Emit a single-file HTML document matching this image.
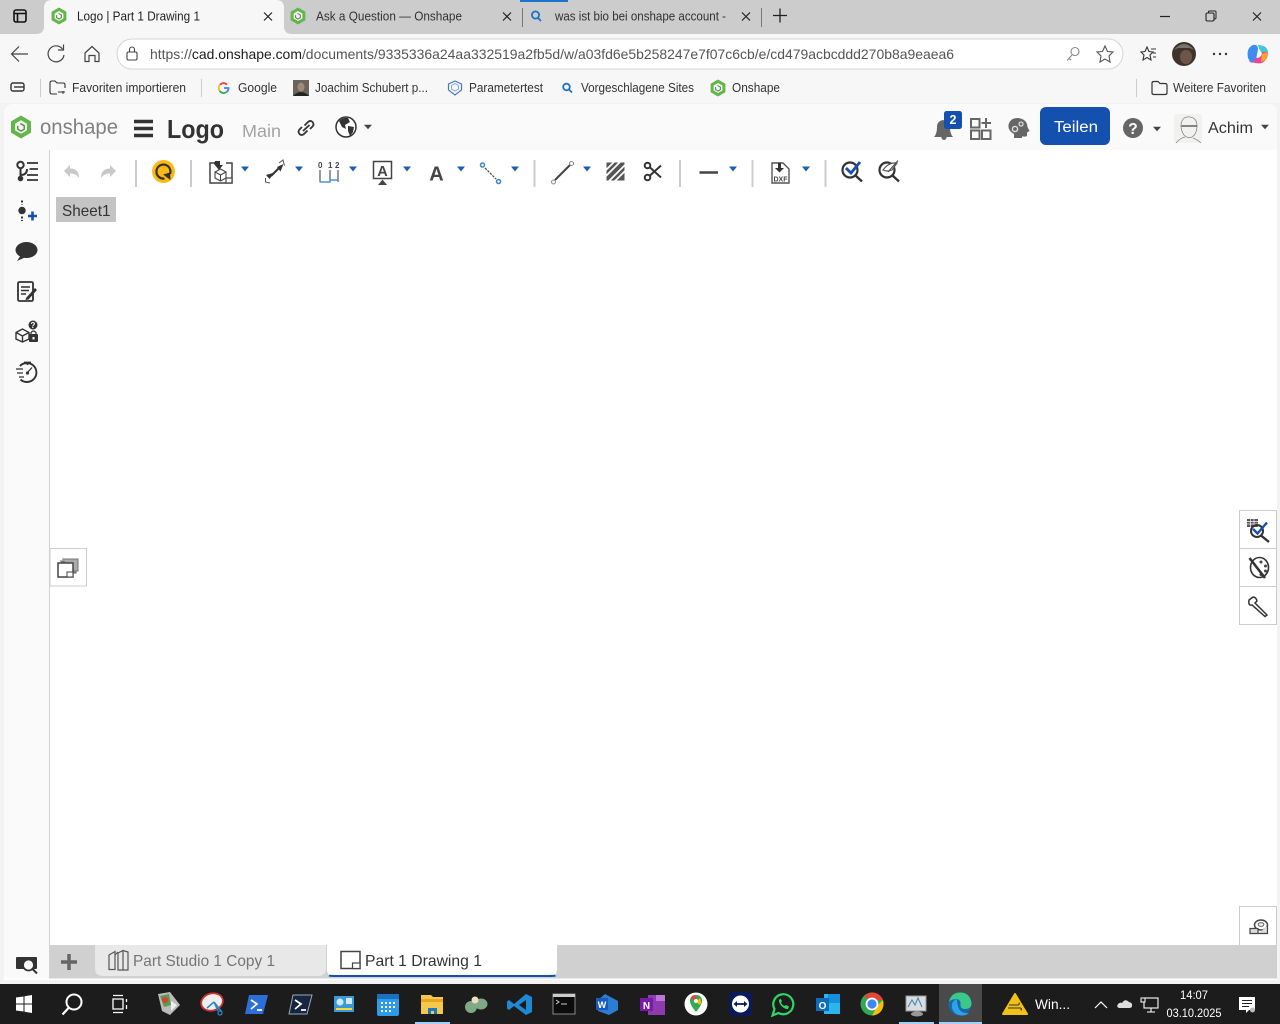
<!DOCTYPE html>
<html lang="de"><head><meta charset="utf-8"><title>Logo | Part 1 Drawing 1</title>
<style>
html,body{margin:0;padding:0;width:1280px;height:1024px;overflow:hidden;background:#f3f3f3}
svg{display:block}
text{font-family:"Liberation Sans",sans-serif;white-space:pre}
.b{font-size:12.5px;fill:#333}
</style></head><body>
<svg width="1280" height="1024" viewBox="0 0 1280 1024" xmlns="http://www.w3.org/2000/svg">
<defs>
<g id="os">
<path d="M0-8.5 7.4-4.2V4.2L0 8.5-7.4 4.2V-4.2Z" fill="#63b64a"/>
<path d="M0-5 4.400-2.500V2.500L0 5-4.400 2.500V-2.500Z" fill="#eef6ea"/>
<path d="M-.5-2.600 2.400-.9V1.600L0 3-2.400 1.600V-.9" fill="none" stroke="#5d7f55" stroke-width="1"/>
</g>
<path id="cb" d="M-4-2.500H4L0 2.500Z" fill="#1c5fb0"/>
<path id="cd" d="M-4-2.200H4L0 2.200Z" fill="#444"/>
<g id="x"><path d="M-4-4 4 4M4-4-4 4" fill="none" stroke="#222" stroke-width="1.200"/></g>
</defs>

<!-- browser chrome -->
<rect width="1280" height="34" fill="#cccccc"/>
<rect y="34" width="1280" height="70" fill="#f7f7f7"/>
<rect x="520" width="48" height="2" fill="#1a73c8"/>
<path d="M36 34q8 0 8-8V8q0-8 8-8H276q8 0 8 8V26q0 8 8 8Z" fill="#f7f7f7"/>
<rect x="14" y="10" width="12" height="12" rx="2" fill="none" stroke="#111" stroke-width="1.600"/>
<path d="M14 13.500H26M17.500 13.500V22" stroke="#111" stroke-width="1.600" fill="none"/>
<use href="#os" x="59" y="16"/>
<text x="77" y="20.500" font-size="12.500" fill="#222" textLength="123" lengthAdjust="spacingAndGlyphs">Logo | Part 1 Drawing 1</text>
<use href="#x" x="268" y="16.500"/>
<use href="#os" x="298" y="16"/>
<text x="316" y="20.500" font-size="12.500" fill="#333" textLength="146" lengthAdjust="spacingAndGlyphs">Ask a Question — Onshape</text>
<use href="#x" x="507" y="16.500"/>
<rect x="522" y="8" width="1" height="19" fill="#777"/>
<circle cx="535.500" cy="15" r="3.600" fill="none" stroke="#1a73c8" stroke-width="1.800"/><path d="M538 18 541 21" stroke="#1a73c8" stroke-width="1.800"/>
<text x="555" y="20.500" font-size="12.500" fill="#333" textLength="171" lengthAdjust="spacingAndGlyphs">was ist bio bei onshape account -</text>
<use href="#x" x="746" y="16.500"/>
<rect x="761" y="8" width="1" height="19" fill="#777"/>
<path d="M773 15.500H787M780 8.500V22.500" stroke="#222" stroke-width="1.300"/>
<path d="M1160 16.500H1170" stroke="#222" stroke-width="1.200"/>
<rect x="1206" y="13" width="8" height="8" rx="1.500" fill="none" stroke="#222" stroke-width="1.100"/><path d="M1208.500 13V11.500Q1208.500 11 1209.500 11H1215Q1216 11 1216 12V18Q1216 19 1214.500 19" fill="none" stroke="#222" stroke-width="1"/>
<use href="#x" x="1257" y="16.500"/>

<!-- nav -->
<path d="M28 54H12M19 46.500 11.500 54 19 61.500" fill="none" stroke="#444" stroke-width="1.200"/>
<path d="M62.500 49A8 8 0 1 0 64 55M63.500 44.500V50H58" fill="none" stroke="#444" stroke-width="1.200"/>
<path d="M85 53 92 46.500 99 53V61.500H95V55.500H89V61.500H85Z" fill="none" stroke="#444" stroke-width="1.200"/>
<rect x="117" y="39" width="1006" height="30" rx="15" fill="#fff" stroke="#d5d5d5"/>
<rect x="127" y="52" width="10" height="8" rx="1.500" fill="none" stroke="#444" stroke-width="1.100"/><path d="M129.500 52V49.500A2.500 2.500 0 0 1 134.500 49.500V52" fill="none" stroke="#444" stroke-width="1.100"/>
<text x="150" y="59" font-size="14" fill="#555" textLength="804" lengthAdjust="spacingAndGlyphs"><tspan fill="#555">https://</tspan><tspan fill="#1b1b1b">cad.onshape.com</tspan><tspan fill="#555">/documents/9335336a24aa332519a2fb5d/w/a03fd6e5b258247e7f07c6cb/e/cd479acbcddd270b8a9eaea6</tspan></text>
<circle cx="1075" cy="51.500" r="4" fill="none" stroke="#888" stroke-width="1.100"/><path d="M1072 55 1067 60.500M1069 58.500 1071 60" fill="none" stroke="#888" stroke-width="1.100"/>
<path d="M1105 46 1107.500 51.500 1113 52 1109 56 1110 62 1105 59 1100 62 1101 56 1097 52 1102.500 51.500Z" fill="none" stroke="#555" stroke-width="1.100"/>
<path d="M1147 47 1149 51.500 1153 52 1150 55 1151 60 1147 57.500 1143 60 1144 55 1141 52 1145 51.500Z" fill="none" stroke="#333" stroke-width="1.100"/><path d="M1151 49H1156M1153 53H1156M1153 57H1156" stroke="#333" stroke-width="1"/>
<circle cx="1184" cy="54" r="12" fill="#3f342d"/><ellipse cx="1186" cy="57" rx="6" ry="7" fill="#6f5547"/><path d="M1174 50Q1184 38 1194 50L1190 48H1178Z" fill="#77766c"/>
<circle cx="1214" cy="54" r="1.200" fill="#333"/><circle cx="1220" cy="54" r="1.200" fill="#333"/><circle cx="1226" cy="54" r="1.200" fill="#333"/>
<path d="M1248 58Q1246 48 1253 45 1258 44 1258 49L1256 60Q1254 64 1250 62Z" fill="#3d8df0"/>
<path d="M1258 45Q1267 45 1268 52L1262 53Q1259 50 1258 45Z" fill="#44c6d8"/>
<path d="M1252 62Q1256 64 1262 63 1268 60 1268 52L1262 52Q1262 58 1256 58Z" fill="#e8469f"/>
<path d="M1262 54 1268 52 1266 60 1261 62Z" fill="#f5a623"/>

<!-- bookmarks -->
<rect x="11" y="83" width="13" height="8" rx="2" fill="none" stroke="#333" stroke-width="1.400"/><path d="M14 87H24" stroke="#333" stroke-width="1.400"/>
<rect x="40" y="79" width="1" height="18" fill="#ccc"/>
<path d="M57 94H52Q50 94 50 92V83Q50 81 52 81H55L57 83H63Q65 83 65 85V88" fill="none" stroke="#333" stroke-width="1.100"/><path d="M58 92H65M63 94V91" fill="none" stroke="#333" stroke-width="1"/>
<text class="b" x="72" y="92" textLength="114" lengthAdjust="spacingAndGlyphs">Favoriten importieren</text>
<rect x="201" y="79" width="1" height="18" fill="#ccc"/>
<path d="M227 84.800A4.500 4.500 0 0 0 220 84.800" fill="none" stroke="#ea4335" stroke-width="1.800"/>
<path d="M219.800 85 A4.500 4.500 0 0 0 219.800 91" fill="none" stroke="#fbbc05" stroke-width="1.800"/>
<path d="M219.800 91A4.500 4.500 0 0 0 226.500 92" fill="none" stroke="#34a853" stroke-width="1.800"/>
<path d="M224 88H228.500A4.500 4.500 0 0 1 226.500 92" fill="none" stroke="#4285f4" stroke-width="1.800"/>
<text class="b" x="238" y="92" textLength="39" lengthAdjust="spacingAndGlyphs">Google</text>
<rect x="293" y="80" width="16" height="16" fill="#6b645d"/><ellipse cx="301" cy="87" rx="3.500" ry="4.500" fill="#a08a78"/><path d="M293 96Q301 88 309 96Z" fill="#222"/>
<text class="b" x="315" y="92" textLength="113" lengthAdjust="spacingAndGlyphs">Joachim Schubert p...</text>
<path d="M455 81 461.500 84V90L455 95 448.500 90V84Z" fill="none" stroke="#4a78c0" stroke-width="1.200"/><path d="M451.500 85.500 455 83.500 458.500 85.500V89L455 91 451.500 89Z" fill="none" stroke="#8aa8d8"/>
<text class="b" x="469" y="92" textLength="74" lengthAdjust="spacingAndGlyphs">Parametertest</text>
<circle cx="566.500" cy="87" r="3.300" fill="none" stroke="#1a73c8" stroke-width="1.800"/><path d="M569 89.500 572 92.500" stroke="#1a73c8" stroke-width="1.800"/>
<text class="b" x="581" y="92" textLength="113" lengthAdjust="spacingAndGlyphs">Vorgeschlagene Sites</text>
<use href="#os" x="718" y="88"/>
<text class="b" x="732" y="92" textLength="48" lengthAdjust="spacingAndGlyphs">Onshape</text>
<rect x="1136" y="79" width="1" height="18" fill="#ccc"/>
<path d="M1152 83Q1152 81.500 1154 81.500H1158L1160 83.500H1165Q1167 83.500 1167 85.500V93Q1167 94.500 1165 94.500H1154Q1152 94.500 1152 93Z" fill="none" stroke="#333" stroke-width="1.200"/>
<text class="b" x="1173" y="92" textLength="93" lengthAdjust="spacingAndGlyphs">Weitere Favoriten</text>

<!-- app frame -->
<rect y="103" width="1280" height="881" fill="#f3f3f3"/>
<path d="M4 980V114Q4 104 14 104H1267Q1277 104 1277 114V980Z" fill="#fff"/>
<path d="M4 150V114Q4 104 14 104H1267Q1277 104 1277 114V150Z" fill="#fafafa"/>
<path d="M4 150H49V980H14Q4 980 4 970Z" fill="#fafafa"/>
<rect x="49" y="150" width="1" height="830" fill="#d2d2d2"/>

<!-- header -->
<g transform="translate(21 127) scale(1.350)"><use href="#os"/></g>
<text x="40" y="134" font-size="21" fill="#808080" textLength="78" lengthAdjust="spacingAndGlyphs">onshape</text>
<path d="M134 121.500H153M134 128.500H153M134 135.500H153" stroke="#333" stroke-width="3.600"/>
<text x="167" y="138" font-size="26" font-weight="700" fill="#333" textLength="57" lengthAdjust="spacingAndGlyphs">Logo</text>
<text x="242" y="137" font-size="17.500" fill="#a3a3a3" textLength="39" lengthAdjust="spacingAndGlyphs">Main</text>
<g fill="none" stroke="#333" stroke-width="1.800"><path d="M304.500 125.500 308 122Q310.500 120 312.500 122 314.500 124.500 312.500 126.500L310 129"/><path d="M307.500 130.500 304 134Q301.500 136 299.500 134 297.500 131.500 299.500 129.500L302 127"/><path d="M303 131 309.500 125"/></g>
<circle cx="346" cy="127" r="10" fill="#fff" stroke="#333" stroke-width="1.500"/>
<path d="M339 121Q343 117 348 118L350 122 345 125 346 129 342 127ZM348 126 354 127 353 132 350 136 348 131Z" fill="#333"/>
<use href="#cd" x="368" y="127"/>
<path d="M934 137Q937 134 937 127 937 121 943 120 949 121 950 127 950 134 953 137Z" fill="#666"/><circle cx="944" cy="137.500" r="2.500" fill="#666"/>
<rect x="944" y="111" width="18" height="18" rx="2.500" fill="#1450ae"/>
<text x="953" y="124" font-size="12.500" font-weight="700" fill="#fff" text-anchor="middle">2</text>
<g fill="none" stroke="#666" stroke-width="2"><rect x="971" y="119" width="8.500" height="8.500"/><rect x="971" y="130.500" width="8.500" height="8.500"/><rect x="982" y="130.500" width="8.500" height="8.500"/><path d="M986 118V128M981.500 123H991"/></g>
<path d="M1014 138V134Q1008 131 1008.500 125 1010 118 1018 118 1027 119 1027.500 127L1029.500 131 1027 132.500V135Q1027 137 1024 136.500H1022V138Z" fill="#666"/>
<circle cx="1015" cy="129" r="2.600" fill="none" stroke="#ddd" stroke-width="1.400"/><circle cx="1021" cy="124" r="2" fill="none" stroke="#ddd" stroke-width="1.300"/>
<rect x="1040" y="107" width="70" height="38" rx="6" fill="#1450ae"/>
<text x="1054" y="132" font-size="15.500" fill="#fff" textLength="44" lengthAdjust="spacingAndGlyphs">Teilen</text>
<circle cx="1133" cy="128" r="10" fill="#666"/>
<text x="1133" y="134" font-size="15.500" font-weight="700" fill="#fff" text-anchor="middle">?</text>
<use href="#cd" x="1157" y="129"/>
<rect x="1174" y="114" width="28" height="29" rx="3" fill="#f1f1ef"/>
<g fill="none" stroke="#888" stroke-width=".8"><path d="M1181 125Q1182 116 1190 117 1197 118 1197 126 1197 134 1192 137 1188 139 1184 135 1181 131 1181 125Z"/><path d="M1176 143Q1180 138 1185 137M1193 138Q1198 140 1201 143"/></g>
<path d="M1181.500 126H1188.500M1191 126H1197M1188.500 126H1191" stroke="#444" stroke-width="1.300"/>
<text x="1208" y="133" font-size="15.500" fill="#333" textLength="45" lengthAdjust="spacingAndGlyphs">Achim</text>
<use href="#cd" x="1265" y="127"/>

<!-- left sidebar icons -->
<g fill="none" stroke="#333" stroke-width="2"><circle cx="20.500" cy="165" r="3.200"/><path d="M20.500 168V178.500M20.500 175Q27 175 27 169"/><circle cx="20.500" cy="178.500" r="1.800" fill="#333"/><path d="M27 163H38M29.500 169H38M27 175H38M27 180H38" stroke-width="1.800"/></g>
<circle cx="22" cy="210.500" r="3.700" fill="#333"/><path d="M22 200.500V204.500M22 216.500V221" stroke="#333" stroke-width="2" stroke-dasharray="2 1.500"/>
<path d="M28 216H37M32.500 211.500V220.500" stroke="#1450ae" stroke-width="2.600"/>
<ellipse cx="26.500" cy="250" rx="11" ry="8" fill="#333"/><path d="M21 255 17 261 26 257Z" fill="#333"/>
<rect x="18" y="282" width="15" height="19" rx="1.500" fill="none" stroke="#333" stroke-width="1.800"/>
<path d="M21 287H30M21 290.500H29M21 294H26" stroke="#333" stroke-width="1.500"/><path d="M26 298 35 288 37 290 28.500 299.500 25.500 300Z" fill="#333"/>
<path d="M16 332.500 22.500 329 29 332.500V339L22.500 342 16 339ZM16 332.500 22.500 336 29 332.500M22.500 336V342" fill="none" stroke="#333" stroke-width="1.400"/>
<circle cx="33" cy="325" r="4.500" fill="#333"/><text x="33" y="328" font-size="8" font-weight="700" fill="#fff" text-anchor="middle">?</text>
<rect x="29" y="334" width="9" height="8" rx="1" fill="#333"/><path d="M31 334V332.500Q33.500 329.500 36 332.500V334" fill="none" stroke="#333" stroke-width="1.200"/><rect x="32.500" y="337" width="2" height="2.500" fill="#fff"/>
<path d="M20 366A9.500 9.500 0 1 1 20.500 379.500" fill="none" stroke="#333" stroke-width="1.900"/><path d="M24 362.500H31M27.500 362.500V365" stroke="#333" stroke-width="1.800"/><path d="M16 369H23M17 373H23M19 377H24M27 373 32 367.500" stroke="#333" stroke-width="1.300" fill="none"/>
<circle cx="27.500" cy="373" r="1.600" fill="#333"/>
<rect x="16" y="957" width="21" height="12" rx="1" fill="#333"/><circle cx="28.500" cy="965" r="5.500" fill="#fafafa" stroke="#333" stroke-width="1.800"/><path d="M32.500 969 37 973.500" stroke="#333" stroke-width="2"/>

<!-- toolbar -->
<g fill="#ccc"><rect x="135" y="160" width="2" height="27"/><rect x="190" y="160" width="2" height="27"/><rect x="533.500" y="160" width="2" height="27"/><rect x="679" y="160" width="2" height="27"/><rect x="751.500" y="160" width="2" height="27"/><rect x="824.500" y="160" width="2" height="27"/></g>
<path d="M64 171 70 165V168.500Q79 168.500 79 178 76 173.500 70 173.500V177Z" fill="#c9c9c9"/>
<path d="M116 171 110 165V168.500Q101 168.500 101 178 104 173.500 110 173.500V177Z" fill="#c9c9c9"/>
<circle cx="163.500" cy="171.500" r="11.500" fill="#fdb913"/>
<path d="M170 174A7 7 0 1 0 164.500 178.500" fill="none" stroke="#333" stroke-width="2.200"/><path d="M163 174.500 170 172.500 170.500 180Z" fill="#333"/>
<path d="M216 163H210V183H232V163H226" fill="none" stroke="#444" stroke-width="1.500"/><rect x="226" y="178" width="6" height="5" fill="#fff" stroke="#444" stroke-width="1.200"/>
<path d="M215 161H220V165H223L219 170 214 164" fill="#333"/><path d="M215 172 220.500 169 226 172V178L220.500 181 215 178ZM215 172 220.500 175 226 172M220.500 175V181" fill="none" stroke="#444" stroke-width="1.100"/>
<use href="#cb" x="245" y="169"/>
<path d="M271 176 281 166" stroke="#333" stroke-width="2"/><path d="M266 175 269.500 179 274.500 172.500ZM283.500 164 277 167 280.500 171.500Z" fill="#333"/><path d="M279 163 283 160 284.500 165.500M265.500 178 265.500 182 270 183" fill="none" stroke="#555"/>
<use href="#cb" x="299" y="169"/>
<g font-size="8" fill="#444"><text x="318" y="168" font-weight="700">0</text><text x="328" y="168" font-weight="700">1</text><text x="335" y="168" font-weight="700">2</text></g>
<path d="M320 170V182M330 170V182M338 170V182" stroke="#555" stroke-width="1.200"/><path d="M319.500 182H330V180H338" fill="none" stroke="#4d92d0" stroke-width="1.400"/>
<use href="#cb" x="353" y="169"/>
<rect x="373.500" y="161.500" width="18" height="17" fill="#fff" stroke="#444" stroke-width="1.500"/>
<text x="382.500" y="176" font-size="14.500" font-weight="700" fill="#444" text-anchor="middle">A</text><path d="M378 185 382.500 179.500 387 185Z" fill="#444"/>
<use href="#cb" x="407" y="169"/>
<text x="436.500" y="180.500" font-size="20" font-weight="700" fill="#444" text-anchor="middle">A</text>
<use href="#cb" x="461" y="169"/>
<path d="M485 168 496 179" stroke="#555" stroke-width="1.300" stroke-dasharray="2.500 1"/><circle cx="482.500" cy="165" r="2" fill="#fff" stroke="#3d85c6" stroke-width="1.500"/><circle cx="498.500" cy="181.500" r="2" fill="#fff" stroke="#3d85c6" stroke-width="1.500"/>
<use href="#cb" x="515" y="169"/>
<path d="M555 180 570 165" stroke="#444" stroke-width="2"/><circle cx="553.500" cy="182" r="2" fill="#fff" stroke="#888"/><circle cx="571.500" cy="163.500" r="2" fill="#fff" stroke="#888"/>
<use href="#cb" x="587" y="169"/>
<rect x="606.500" y="162.500" width="18" height="18" fill="#555"/><path d="M606 170 614 162M606 176 620 162M609 181 625 165M615 181 625 171" stroke="#fff" stroke-width="1.700"/>
<g fill="none" stroke="#333" stroke-width="2"><circle cx="647.500" cy="165.500" r="2.800"/><circle cx="647.500" cy="177.500" r="2.800"/><path d="M650 167.500 661 177.500M650 175.500 661 165.500"/></g>
<path d="M699.500 172.500H718" stroke="#444" stroke-width="2.400"/>
<use href="#cb" x="733" y="169"/>
<path d="M772 163H783L789 169V183H772Z" fill="#fff" stroke="#555" stroke-width="1.400"/>
<path d="M778 162.500H781V168H784L779.500 172.500 775 168H778Z" fill="#333"/>
<text x="780.500" y="181.500" font-size="7.500" font-weight="700" fill="#444" text-anchor="middle" textLength="14" lengthAdjust="spacingAndGlyphs">DXF</text>
<use href="#cb" x="806" y="169"/>
<circle cx="850" cy="170" r="7.500" fill="none" stroke="#333" stroke-width="2.200"/><path d="M855.500 175.500 862 181.500" stroke="#333" stroke-width="2.400"/>
<path d="M846 168 851 173 860 162" fill="none" stroke="#1450ae" stroke-width="2.800"/>
<circle cx="887" cy="170" r="7.500" fill="none" stroke="#333" stroke-width="2.200"/><path d="M892.500 175.500 899 181.500" stroke="#333" stroke-width="2.400"/>
<path d="M883 170Q889 162 897 163L892 170Q887 172 883 170ZM888 172 898 160.500" fill="#fff" stroke="#555" stroke-width="1.200"/>

<!-- sheet -->
<rect x="56" y="197" width="60" height="25" fill="#c4c4c4"/>
<text x="62" y="216" font-size="16" fill="#333" textLength="48.500" lengthAdjust="spacingAndGlyphs">Sheet1</text>

<!-- floating left -->
<rect x="50" y="548.500" width="36.500" height="37.500" fill="#fff" stroke="#ccc"/>
<path d="M60 561H76V573H73" fill="#888" stroke="#666"/><path d="M62 559H78V571H76" fill="#aaa" stroke="#777"/>
<rect x="58" y="563" width="15" height="14" fill="#fff" stroke="#444" stroke-width="1.500"/><rect x="67" y="572" width="6" height="5" fill="#fff" stroke="#444"/>

<!-- right panel -->
<rect x="1239.500" y="510.500" width="37" height="114" fill="#fff" stroke="#ccc"/>
<path d="M1239 548.500H1277M1239 586.500H1277" stroke="#ccc"/>
<rect x="1247" y="519" width="11" height="8" fill="#555"/><path d="M1247 521.500H1258M1247 524H1258M1250.500 519V527M1254 519V527" stroke="#fff" stroke-width=".7"/>
<circle cx="1257" cy="531" r="6" fill="none" stroke="#333" stroke-width="2"/><path d="M1261 535.500 1269 542" stroke="#333" stroke-width="2.400"/><path d="M1253 529 1257.500 533.500 1267 522.500" fill="none" stroke="#1450ae" stroke-width="2.400"/>
<ellipse cx="1259.500" cy="567.500" rx="9" ry="10" fill="#fff" stroke="#333" stroke-width="1.600"/>
<circle cx="1261" cy="562" r="1.500" fill="#444"/><circle cx="1265.500" cy="566" r="1.500" fill="#444"/><circle cx="1265.500" cy="571" r="1.500" fill="#444"/><circle cx="1261" cy="574.500" r="1.500" fill="#444"/>
<path d="M1249.500 558 1265 578" stroke="#333" stroke-width="2.600"/>
<path d="M1249 600 1253 597Q1256 597 1257 601L1255 603 1267 615 1265 616.500 1252 605Q1248 606 1249 600Z" fill="#fff" stroke="#333" stroke-width="1.500"/>

<!-- bottom-right -->
<rect x="1239.500" y="906.500" width="37" height="39" fill="#fff" stroke="#ccc"/>
<ellipse cx="1261" cy="925" rx="6.500" ry="5" fill="#fff" stroke="#444" stroke-width="1.500"/><ellipse cx="1261" cy="924.500" rx="2.800" ry="1.800" fill="none" stroke="#555"/>
<path d="M1250 928.500H1258V933.500H1250ZM1258 933.500H1267.500V926" fill="#ddd" stroke="#444" stroke-width="1.200"/>

<!-- bottom tabs -->
<rect x="50" y="945" width="1227" height="33.500" fill="#d0d0d0"/>
<rect x="4" y="978.500" width="1273" height="1.500" fill="#fff"/>
<path d="M61 962H77M69 954V970" stroke="#666" stroke-width="3.500"/>
<path d="M95 945H326V968Q326 976 318 976H103Q95 976 95 968Z" fill="#e8e8e8"/>
<g fill="none" stroke="#555" stroke-width="1.200"><path d="M109 955 115 951.500V969.500H109ZM115 955 118 952"/><path d="M118 953 123 950.500 128 952V970H118Z"/><path d="M123 951V970"/></g>
<text x="133" y="966" font-size="16" fill="#757575" textLength="142" lengthAdjust="spacingAndGlyphs">Part Studio 1 Copy 1</text>
<path d="M327 945H557V969Q557 977 549 977H335Q327 977 327 969Z" fill="#fff"/>
<path d="M329 975.500Q330 976 336 976H548Q554 976 555.500 975.500" fill="none" stroke="#1450ae" stroke-width="2"/>
<rect x="341" y="951.500" width="19" height="17" fill="#fff" stroke="#444" stroke-width="1.500"/><rect x="352.500" y="963" width="7.500" height="5.500" fill="#fff" stroke="#444" stroke-width="1.200"/>
<text x="365" y="966" font-size="16" fill="#333" textLength="117" lengthAdjust="spacingAndGlyphs">Part 1 Drawing 1</text>

<!-- taskbar -->
<rect y="984" width="1280" height="40" fill="#1c1c1c"/>
<rect x="939" y="984" width="43" height="40" fill="#4a4a4a"/>
<rect x="415" y="1022" width="35" height="2" fill="#9fd0f5"/><rect x="899" y="1022" width="35" height="2" fill="#9fd0f5"/><rect x="939" y="1022" width="43" height="2" fill="#9fd0f5"/>
<path d="M16 997.500 23.500 996.500V1003.500H16ZM24.500 996.300 32 995V1003.500H24.500ZM16 1004.500H23.500V1011.500L16 1010.500ZM24.500 1004.500H32V1013L24.500 1011.700Z" fill="#fff"/>
<circle cx="74" cy="1002" r="7.500" fill="none" stroke="#fff" stroke-width="2"/><path d="M68.500 1008 62.500 1014.500" stroke="#fff" stroke-width="2.200"/>
<path d="M113 999H123V1009H113ZM113 995.500H123M113 1012.500H123M126.500 999V1002M126.500 1005V1009" fill="none" stroke="#fff" stroke-width="1.300"/>
<path d="M158 994 170 992 180 1005 170 1015 162 1011Z" fill="#bbb"/><path d="M160 996 169 994 171 1005 164 1007Z" fill="#5a9b4a"/><circle cx="165" cy="1000" r="3" fill="#d84040"/><path d="M171 1001 177 1005 171 1011Z" fill="#eee"/>
<ellipse cx="212" cy="1002" rx="11" ry="8.500" fill="#eee" stroke="#c33" stroke-width="1.800" transform="rotate(-15 212 1002)"/><path d="M214 1002 207 1008M214 1002 222 1012M214 1002 218 1011" stroke="#2a84c8" stroke-width="1.500"/><circle cx="220" cy="1013" r="2" fill="none" stroke="#2a84c8" stroke-width="1.300"/>
<path d="M249 995H268L263 1014H245Z" fill="#2d6fd8"/><path d="M251 1000 257 1004 251 1009M257 1010H262" fill="none" stroke="#fff" stroke-width="1.700"/>
<path d="M293 995H312L307 1014H289Z" fill="#16263f" stroke="#9ab" stroke-width="1"/><path d="M295 1000 301 1004 295 1009M301 1010H306" fill="none" stroke="#fff" stroke-width="1.700"/>
<rect x="334" y="996" width="20" height="16" fill="#3a9ad9"/><circle cx="340" cy="1002" r="3.500" fill="#cfe8fa"/><rect x="346" y="998" width="6" height="6" fill="#cfe8fa"/><rect x="336" y="1008" width="16" height="2" fill="#fdd835"/>
<rect x="377" y="994" width="22" height="22" rx="2" fill="#2e9be8"/><rect x="377" y="994" width="22" height="5" fill="#1a6fc0"/><g fill="#fff"><rect x="381" y="1002" width="2" height="2"/><rect x="385" y="1002" width="2" height="2"/><rect x="389" y="1002" width="2" height="2"/><rect x="393" y="1002" width="2" height="2"/><rect x="381" y="1006" width="2" height="2"/><rect x="385" y="1006" width="2" height="2"/><rect x="389" y="1006" width="2" height="2"/><rect x="393" y="1006" width="2" height="2"/><rect x="381" y="1010" width="2" height="2"/><rect x="385" y="1010" width="2" height="2"/><rect x="389" y="1010" width="2" height="2"/></g>
<path d="M421 995H431L433 997H443V1014H421Z" fill="#f5c84c"/><rect x="421" y="999" width="22" height="3" fill="#e8a620"/><path d="M428 1014V1008H437V1014H434V1011H431V1014Z" fill="#1e78c8"/>
<ellipse cx="471" cy="1007" rx="6" ry="6" fill="#7fa884"/><ellipse cx="481" cy="1004" rx="6.500" ry="5.500" fill="#7fa884"/><circle cx="475" cy="1000" r="3.500" fill="#ecdcc4"/>
<path d="M526 994 532 997V1012L526 1015 514 1006 509 1010 507 1008.500V1001.500L509 1000 514 1004ZM526 1000 519 1005 526 1010Z" fill="#1f8ad2"/>
<rect x="553" y="994" width="22" height="20" fill="#0c0c0c" stroke="#888"/><rect x="553" y="994" width="22" height="3" fill="#ccc"/><path d="M556 1000 559 1002 556 1004M561 1004H567" fill="none" stroke="#ccc"/>
<path d="M605 994 618 1001V1010L609 1015 598 1011V1000Z" fill="#2b7cd3"/><rect x="596" y="998" width="12" height="12" fill="#185abd"/><text x="602" y="1008" font-size="9" font-weight="700" fill="#fff" text-anchor="middle">W</text>
<rect x="648" y="995" width="17" height="20" fill="#8e3bb0"/><rect x="656" y="995" width="9" height="6" fill="#ba77d8"/><rect x="640" y="998" width="13" height="13" fill="#7719aa"/><text x="646.500" y="1009" font-size="10" font-weight="700" fill="#fff" text-anchor="middle">N</text>
<circle cx="696" cy="1004" r="11.500" fill="#fff"/><path d="M696 995Q690 995 690 1001 690 1005 696 1012 702 1005 702 1001 702 995 696 995Z" fill="#34a853"/><path d="M691 998 696 1002 696 995Q692 995 691 998Z" fill="#ea4335"/><path d="M700 998 696 1002 700 1005Q702 1002 700 998Z" fill="#fbbc05"/><circle cx="696" cy="1001" r="2" fill="#fff"/>
<rect x="729" y="992" width="23" height="24" rx="4" fill="#0a1a5c"/><circle cx="740.500" cy="1004" r="8.500" fill="#fff"/><path d="M735 1004H746" stroke="#0a1a5c" stroke-width="1.800"/><path d="M733.500 1004 737 1001V1007ZM747.500 1004 744 1001V1007Z" fill="#0a1a5c"/>
<path d="M772.500 1015.500 774.500 1009A10 10 0 1 1 778.500 1013Z" fill="none" stroke="#2fd566" stroke-width="2.200"/><path d="M779 1000Q778.500 1003 782 1006.500 785 1009.500 788 1009L789 1006.500 786 1005 784.500 1006Q782 1005 781 1002.500L782 1001 780.500 998.500Z" fill="#2fd566"/>
<rect x="824" y="994" width="16" height="20" fill="#2bb5ec"/><path d="M828 994H840V1003H828Z" fill="#1490df"/><rect x="816" y="998" width="13" height="13" fill="#0f6cbd"/><text x="822.500" y="1009" font-size="10" font-weight="700" fill="#fff" text-anchor="middle">O</text>
<circle cx="872" cy="1004" r="11.500" fill="#34a853"/><path d="M872 992.500A11.500 11.500 0 0 1 883 1000H872L864 997A11.500 11.500 0 0 1 872 992.500Z" fill="#ea4335"/><path d="M883.500 1004A11.500 11.500 0 0 1 872 1015.500L878 1005 883 1000Q883.500 1002 883.500 1004Z" fill="#fbbc05"/><circle cx="872" cy="1004" r="5.500" fill="#4285f4" stroke="#fff" stroke-width="1.800"/>
<rect x="906" y="996" width="20" height="15" fill="#d8dde0" stroke="#999"/><path d="M908 1007 912 1000 915 1005 918 998 922 1007" fill="none" stroke="#4a88b8" stroke-width="1.100"/><ellipse cx="917" cy="1014" rx="6" ry="2.500" fill="#999"/>
<circle cx="960" cy="1004" r="11.500" fill="#1668a8"/><path d="M949 1002Q951 992.500 960 992.500 970 992.500 971.500 1003 971.500 1009 965 1009 960 1009 960.500 1004.500 961 1000 957 999 951 999 949 1002Z" fill="#3bc98a"/><path d="M957 999Q951 1001 952 1008 954 1015 962 1015.500 966 1015.500 969 1013 962 1014 959 1009 957 1004 957 999Z" fill="#2ca3e8"/>
<path d="M1015 994 1027 1014H1003Z" fill="#f2c118" stroke="#f2c118" stroke-linejoin="round" stroke-width="2"/><path d="M1009 1005H1017Q1020 1005 1019 1002.500M1008 1008H1020Q1022 1008 1021 1010.500" fill="none" stroke="#333" stroke-width="1.100"/>
<text x="1035" y="1009" font-size="14" fill="#fff" textLength="35" lengthAdjust="spacingAndGlyphs">Win...</text>
<path d="M1095 1008 1101 1002 1107 1008" fill="none" stroke="#fff" stroke-width="1.200"/>
<path d="M1119 1008Q1116 1007 1118 1004 1120 1002 1122 1003 1125 998 1129 1002 1133 1003 1132 1006 1132 1008 1129 1008Z" fill="#ddd"/>
<rect x="1144" y="998" width="14" height="10" fill="none" stroke="#fff" stroke-width="1.100"/><rect x="1141" y="998" width="4" height="4" fill="#1c1c1c" stroke="#fff" stroke-width="1"/><path d="M1151 1008V1012M1147 1012H1155" stroke="#fff" stroke-width="1.100"/>
<text x="1194" y="999" font-size="12" fill="#fff" text-anchor="middle" textLength="28" lengthAdjust="spacingAndGlyphs">14:07</text>
<text x="1194" y="1017" font-size="12" fill="#fff" text-anchor="middle" textLength="55" lengthAdjust="spacingAndGlyphs">03.10.2025</text>
<path d="M1239 997H1255V1010H1249L1246 1013V1010H1239Z" fill="#fff"/><path d="M1242 1000.500H1252M1242 1003.500H1252M1242 1006.500H1249" stroke="#222" stroke-width="1"/>
<circle cx="1252.500" cy="1010" r="2.500" fill="#bbb"/>
</svg>
</body></html>
